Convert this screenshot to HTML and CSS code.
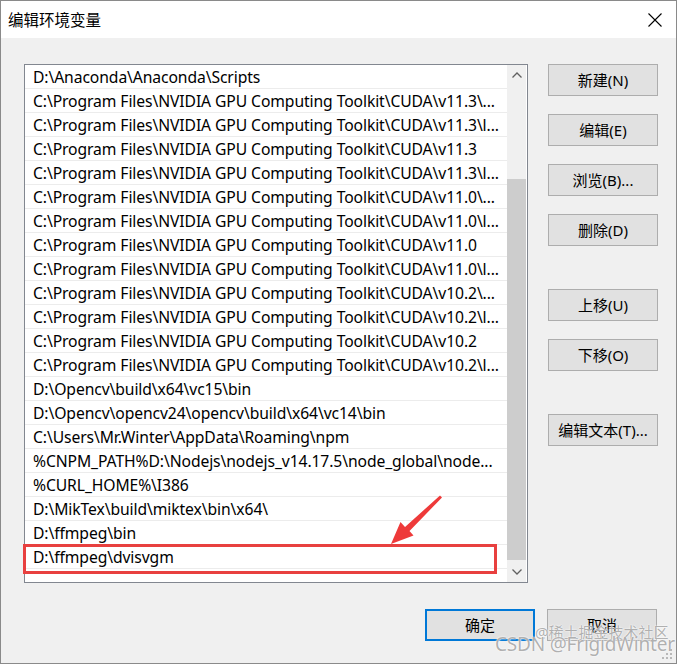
FILE: index.html
```html
<!DOCTYPE html>
<html lang="zh-CN">
<head>
<meta charset="utf-8">
<title>编辑环境变量</title>
<link rel="stylesheet" href="styles.css">
</head>
<body>
<div class="window">
  <div class="titlebar">
    <span class="title">编辑环境变量</span>
    <svg class="close" width="14" height="14" viewBox="0 0 14 14"><path d="M0.5 0.5 L13.5 13.5 M13.5 0.5 L0.5 13.5" stroke="#000" stroke-width="1.1" fill="none"/></svg>
  </div>
  <div class="content">
    <div class="main">
      <div class="listbox">
        <div class="rows">
          <div class="row">D:\Anaconda\Anaconda\Scripts</div>
          <div class="row">C:\Program Files\NVIDIA GPU Computing Toolkit\CUDA\v11.3\...</div>
          <div class="row">C:\Program Files\NVIDIA GPU Computing Toolkit\CUDA\v11.3\l...</div>
          <div class="row">C:\Program Files\NVIDIA GPU Computing Toolkit\CUDA\v11.3</div>
          <div class="row">C:\Program Files\NVIDIA GPU Computing Toolkit\CUDA\v11.3\l...</div>
          <div class="row">C:\Program Files\NVIDIA GPU Computing Toolkit\CUDA\v11.0\...</div>
          <div class="row">C:\Program Files\NVIDIA GPU Computing Toolkit\CUDA\v11.0\l...</div>
          <div class="row">C:\Program Files\NVIDIA GPU Computing Toolkit\CUDA\v11.0</div>
          <div class="row">C:\Program Files\NVIDIA GPU Computing Toolkit\CUDA\v11.0\l...</div>
          <div class="row">C:\Program Files\NVIDIA GPU Computing Toolkit\CUDA\v10.2\...</div>
          <div class="row">C:\Program Files\NVIDIA GPU Computing Toolkit\CUDA\v10.2\l...</div>
          <div class="row">C:\Program Files\NVIDIA GPU Computing Toolkit\CUDA\v10.2</div>
          <div class="row">C:\Program Files\NVIDIA GPU Computing Toolkit\CUDA\v10.2\l...</div>
          <div class="row">D:\Opencv\build\x64\vc15\bin</div>
          <div class="row">D:\Opencv\opencv24\opencv\build\x64\vc14\bin</div>
          <div class="row">C:\Users\Mr.Winter\AppData\Roaming\npm</div>
          <div class="row">%CNPM_PATH%D:\Nodejs\nodejs_v14.17.5\node_global\node...</div>
          <div class="row">%CURL_HOME%\I386</div>
          <div class="row">D:\MikTex\build\miktex\bin\x64\</div>
          <div class="row">D:\ffmpeg\bin</div>
          <div class="row">D:\ffmpeg\dvisvgm</div>
        </div>
        <div class="scrollbar">
          <div class="sb-btn">
            <svg width="10" height="6" viewBox="0 0 10 6"><path d="M0.5 5.5 L5 1 L9.5 5.5" stroke="#606060" stroke-width="1.3" fill="none"/></svg>
          </div>
          <div class="sb-track"><div class="sb-thumb"></div></div>
          <div class="sb-btn">
            <svg width="10" height="6" viewBox="0 0 10 6"><path d="M0.5 0.5 L5 5 L9.5 0.5" stroke="#606060" stroke-width="1.3" fill="none"/></svg>
          </div>
        </div>
        <div class="highlight"></div>
      </div>
      <div class="side">
        <button class="btn">新建(N)</button>
        <button class="btn">编辑(E)</button>
        <button class="btn">浏览(B)...</button>
        <button class="btn">删除(D)</button>
        <button class="btn group">上移(U)</button>
        <button class="btn">下移(O)</button>
        <button class="btn group">编辑文本(T)...</button>
      </div>
    </div>
    <div class="footer">
      <button class="btn primary">确定</button>
      <button class="btn">取消</button>
    </div>
  </div>
  <svg class="arrow" width="677" height="664" viewBox="0 0 677 664"><polygon points="391,544 400.5,522 405,527 440,495.5 442,497.5 409.5,531 413.5,535.5" fill="#ee3a3a"/></svg>
  <div class="wm wm1">@稀土掘金技术社区</div>
  <div class="wm wm2">CSDN @FrigidWinter</div>
  <svg class="grip" width="12" height="12" viewBox="0 0 12 12" fill="#b8b8b8"><rect x="8" y="0" width="2" height="2"/><rect x="4" y="4" width="2" height="2"/><rect x="8" y="4" width="2" height="2"/><rect x="0" y="8" width="2" height="2"/><rect x="4" y="8" width="2" height="2"/><rect x="8" y="8" width="2" height="2"/></svg>
</div>
</body>
</html>
```
FILE: styles.css
```css
* { box-sizing: border-box; }
html, body { margin: 0; padding: 0; }
body {
  width: 677px;
  height: 664px;
  font-family: "Noto Sans", "Noto Sans CJK SC", sans-serif;
  font-size: 15px;
  color: #000;
  background: #f0f0f0;
}
.window {
  position: relative;
  width: 677px;
  height: 664px;
  border: 1px solid #8a8a8a;
  background: #f0f0f0;
  display: flex;
  flex-direction: column;
  overflow: hidden;
}
.titlebar {
  height: 37px;
  background: #fff;
  display: flex;
  align-items: center;
  justify-content: space-between;
  padding: 0 14px 0 7px;
  flex: none;
}
.title {
  font-family: "Noto Sans CJK SC", sans-serif;
  font-size: 15.5px;
  line-height: 1;
  margin-top: 1px;
}
.close { display: block; }
.content {
  flex: 1;
  padding: 26px 19px 0 23px;
  display: flex;
  flex-direction: column;
}
.main {
  display: flex;
  gap: 20px;
  align-items: flex-start;
}
.listbox {
  position: relative;
  width: 504px;
  height: 519px;
  border: 1px solid #828790;
  background: #fff;
  display: flex;
  flex: none;
}
.rows {
  flex: 1;
  overflow: hidden;
}
.row {
  height: 24px;
  line-height: 22px;
  padding-top: 1px;
  padding-left: 8px;
  border-bottom: 1px solid #ececec;
  white-space: nowrap;
  overflow: hidden;
  font-size: 15.7px;
  letter-spacing: -0.1px;
}
.scrollbar {
  width: 19px;
  flex: none;
  background: #f0f0f0;
  display: flex;
  flex-direction: column;
  margin-right: 1px;
}
.sb-btn {
  height: 20px;
  display: flex;
  align-items: center;
  justify-content: center;
  flex: none;
}
.sb-track {
  flex: 1;
  display: flex;
  flex-direction: column;
  justify-content: flex-end;
  padding-bottom: 2px;
}
.sb-thumb {
  height: 381px;
  background: #cdcdcd;
}
.highlight {
  position: absolute;
  left: -2px;
  top: 479px;
  width: 474px;
  height: 30px;
  border: 3px solid #e8403f;
}
.side {
  display: flex;
  flex-direction: column;
  gap: 18px;
}
.btn {
  width: 110px;
  height: 32px;
  background: #e1e1e1;
  border: 1px solid #adadad;
  font-family: "Noto Sans", "Noto Sans CJK SC", sans-serif;
  font-size: 15px;
  color: #000;
  padding: 0;
  margin: 0;
  line-height: 1;
}
.btn.group { margin-top: 25px; }
.footer {
  display: flex;
  justify-content: flex-end;
  gap: 12px;
  margin-top: 26px;
}
.btn.primary {
  border: 2px solid #0078d7;
}
.arrow {
  position: absolute;
  left: -1px;
  top: -1px;
  pointer-events: none;
}
.wm {
  position: absolute;
  color: rgba(150, 150, 150, 0.75);
  text-shadow: 0 0 1px #fff, 0 0 2px #fff;
  white-space: nowrap;
  font-family: "Noto Sans", "Noto Sans CJK SC", sans-serif;
}
.wm1 {
  left: 534px;
  top: 620px;
  font-size: 15px;
}
.wm2 {
  left: 494px;
  top: 630px;
  font-size: 19px;
  letter-spacing: -0.2px;
}
.grip {
  position: absolute;
  right: 2px;
  bottom: 2px;
}
```
